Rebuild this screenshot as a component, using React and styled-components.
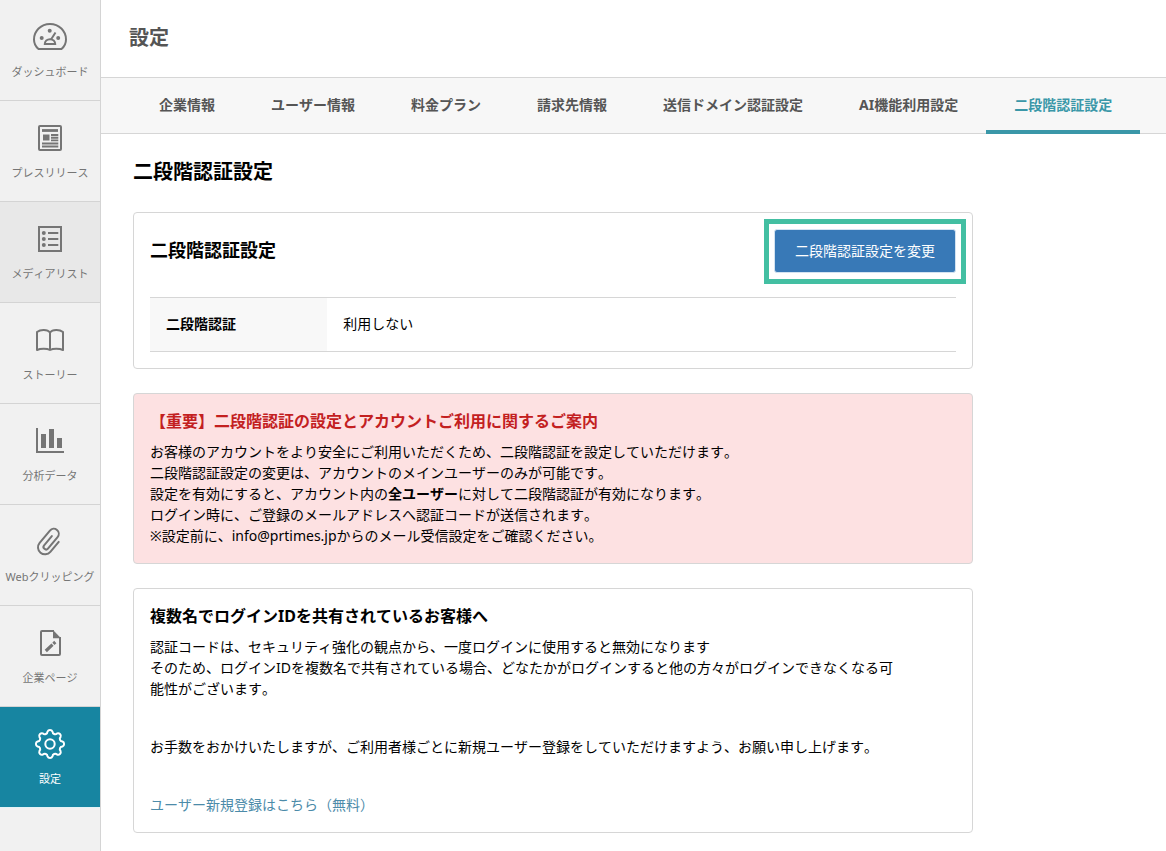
import React from 'react';
import styled, { createGlobalStyle, css } from 'styled-components';

const GlobalStyle = createGlobalStyle`
  *, *::before, *::after {
    box-sizing: border-box;
  }

  body {
    margin: 0;
    background: #fff;
    color: #000;
    font-family: 'Noto Sans', 'Noto Sans CJK JP', sans-serif;
    font-size: 14px;
    font-kerning: none;
    line-height: 21px;
  }

  a {
    color: inherit;
    text-decoration: none;
  }
`;

const Layout = styled.div`
  display: flex;
  min-height: 100vh;
`;

const Sidebar = styled.nav`
  flex: 0 0 101px;
  background: #f1f1f1;
  border-right: 1px solid #d4d4d4;
`;

const SideLink = styled.a`
  display: flex;
  flex-direction: column;
  align-items: center;
  gap: 8px;
  padding: 20px 0;
  border-bottom: 1px solid #d4d4d4;
  color: #757575;
  font-size: 11px;
  line-height: 16px;
  white-space: nowrap;

  ${({ $hovered }) => $hovered && css`
    background: #e8e8e8;
  `}

  ${({ $active }) => $active && css`
    background: #1785a1;
    border-bottom-color: #e3f3f6;
    color: #fff;
  `}
`;

const IconSvg = styled.svg`
  width: 36px;
  height: 36px;
  fill: none;
  stroke: currentColor;
  stroke-width: 2;
`;

const Main = styled.main`
  flex: 1;
  min-width: 0;
`;

const PageHeader = styled.header`
  padding: 23px 28px 25px;
  border-bottom: 1px solid #d6d6d6;
`;

const PageTitle = styled.h1`
  margin: 0;
  color: #555;
  font-size: 20px;
  line-height: 29px;
`;

const Tabs = styled.nav`
  display: flex;
  padding: 0 30px;
  background: #f7f7f7;
  border-bottom: 1px solid #d6d6d6;
`;

const Tab = styled.a`
  margin-bottom: -1px;
  padding: 16px 28px 15px;
  border-bottom: 4px solid ${({ $active }) => ($active ? '#3a97a8' : 'transparent')};
  color: ${({ $active }) => ($active ? '#3a97a8' : '#555')};
  font-weight: 700;
  white-space: nowrap;
`;

const Content = styled.div`
  display: flex;
  flex-direction: column;
  gap: 24px;
  max-width: 904px;
  padding: 24px 32px 16px;
`;

const SectionTitle = styled.h2`
  margin: 0 0 2px;
  font-size: 20px;
  line-height: 28px;
`;

const Card = styled.section`
  padding: 16px;
  border: 1px solid #d6d6d6;
  border-radius: 4px;
`;

const NoticeCard = styled(Card)`
  padding: 15px 16px 17px;
  background: ${({ $alert }) => ($alert ? '#fde1e2' : '#fff')};
`;

const CardHeader = styled.div`
  display: flex;
  align-items: center;
  justify-content: space-between;
  margin-bottom: 24px;
`;

const CardTitle = styled.h3`
  margin: 0;
  padding-bottom: 2px;
  font-size: 18px;
  line-height: 26px;
`;

const ButtonFrame = styled.div`
  position: relative;
  display: flex;

  /* Square highlight drawn round the button */
  &::after {
    content: '';
    position: absolute;
    inset: -10px -10px -11px;
    border: 5px solid #43bfa2;
    pointer-events: none;
  }
`;

const ChangeButton = styled.button`
  padding: 11px 20px;
  border: 1px solid #d3e3f1;
  border-radius: 3px;
  background: #3879b7;
  color: #fff;
  font: inherit;
  line-height: 20px;
  cursor: pointer;
`;

const SettingTable = styled.table`
  width: 100%;
  border-collapse: separate;
  border-spacing: 0;

  th,
  td {
    padding: 15px 16px 17px;
    border-top: 1px solid #d6d6d6;
    border-bottom: 1px solid #d6d6d6;
    text-align: left;
  }

  th {
    width: 22%;
    background: #f8f8f8;
  }
`;

const NoticeTitle = styled.h3`
  margin: 0 0 8px;
  color: ${({ $alert }) => ($alert ? '#c3201f' : '#000')};
  font-size: 16px;
  line-height: 24px;
`;

const NoticeText = styled.p`
  max-width: 750px;
  margin: 0;

  & + & {
    margin-top: 37px;
  }
`;

const TextLink = styled.a`
  color: #4c8ba9;
`;

// Eight rounded teeth made of alternating convex and concave arcs
const gearPath = Array.from({ length: 17 }, (_, i) => {
  const angle = ((i * 22.5 - 101.25) * Math.PI) / 180;
  const x = (18 + 12.7 * Math.cos(angle)).toFixed(2);
  const y = (17 + 12.7 * Math.sin(angle)).toFixed(2);
  return i === 0 ? `M${x} ${y}` : `A2.7 2.7 0 0 ${i % 2} ${x} ${y}`;
}).join('') + 'Z';

const icons = {
  dashboard: (
    <>
      <path d="M6.5 29h23C32.500 26.500 34 23 34 19.500 34 11 27 4 18 4S2 11 2 19.500c0 3.500 1.500 7 4.500 9.500z" />
      <path d="M12.800 24h10.400c0-2.800-2.300-4.800-5.200-4.800s-5.200 2-5.200 4.800zM19 19.500l4.500-7" />
      <g fill="currentColor" stroke="none">
        <circle cx="9.700" cy="18" r="2" />
        <circle cx="17.700" cy="10.800" r="2" />
        <circle cx="26.200" cy="18" r="2" />
      </g>
    </>
  ),
  release: (
    <>
      <rect x="7" y="5" width="22" height="24" rx="1" />
      <path d="M10 9.500h16" strokeWidth="2.800" />
      <path d="M11 13.500h6.500v6H11z" fill="currentColor" stroke="none" />
      <path d="M19 14h7.300M19 16.700h7.300M19 19.400h7.300M10 22.500h16.300M10 25.500h16.300" strokeWidth="1.900" />
    </>
  ),
  list: (
    <>
      <rect x="7" y="5" width="22" height="24" />
      <path d="M16 11h10.300M16 17h10.300M16 23h10.300" />
      <g fill="currentColor" stroke="none">
        <circle cx="11.800" cy="11" r="2" />
        <circle cx="11.800" cy="17" r="2" />
        <circle cx="11.800" cy="23" r="2" />
      </g>
    </>
  ),
  story: (
    <path
      d="M18 9.500C15.500 6.300 8.500 6.300 5 9v18c3.500-1.800 10-1.800 13 0 3-1.800 9.500-1.800 13 0V9c-3.500-2.700-10.500-2.700-13 .5zM18 9.500V27"
      strokeLinejoin="round"
    />
  ),
  chart: (
    <>
      <path d="M5 4v24h27" />
      <path d="M9 10h5v14H9zM17 5h5v19h-5zM25 14h5v10h-5z" fill="currentColor" stroke="none" />
    </>
  ),
  clip: (
    <path
      d="M7-6V7A7 7 0 0 1-7 7V-9A5 5 0 0 1 3-9V6a2.500 2.500 0 0 1-5 0V-6"
      transform="translate(17.500 17) rotate(40)"
      strokeLinecap="round"
    />
  ),
  page: (
    <>
      <path d="M22 5H10a1 1 0 0 0-1 1v22a1 1 0 0 0 1 1h17a1 1 0 0 0 1-1V11" />
      <path d="M21 4l8 8.300h-8z" fill="currentColor" stroke="none" />
      <path d="M13.800 25l6.700-6.300M21.400 17.800l1.900-1.800" strokeWidth="3.200" />
    </>
  ),
  setting: (
    <>
      <path d={gearPath} strokeLinejoin="round" />
      <circle cx="18" cy="17" r="4.700" />
    </>
  ),
};

const sideItems = [
  { icon: 'dashboard', label: 'ダッシュボード' },
  { icon: 'release', label: 'プレスリリース' },
  { icon: 'list', label: 'メディアリスト', hovered: true },
  { icon: 'story', label: 'ストーリー' },
  { icon: 'chart', label: '分析データ' },
  { icon: 'clip', label: 'Webクリッピング' },
  { icon: 'page', label: '企業ページ' },
  { icon: 'setting', label: '設定', active: true },
];

const tabs = [
  '企業情報',
  'ユーザー情報',
  '料金プラン',
  '請求先情報',
  '送信ドメイン認証設定',
  'AI機能利用設定',
  '二段階認証設定',
];

const App = () => {
  return (
    <>
      <GlobalStyle />
      <Layout>
        <Sidebar>
          {sideItems.map(({ icon, label, hovered, active }) => (
            <SideLink key={icon} href={`#${icon}`} $hovered={hovered} $active={active}>
              <IconSvg viewBox="0 0 36 36" aria-hidden="true">{icons[icon]}</IconSvg>
              {label}
            </SideLink>
          ))}
        </Sidebar>

        <Main>
          <PageHeader>
            <PageTitle>設定</PageTitle>
          </PageHeader>
          <Tabs>
            {tabs.map((tab) => (
              <Tab key={tab} href="#tab" $active={tab === '二段階認証設定'}>{tab}</Tab>
            ))}
          </Tabs>

          <Content>
            <SectionTitle>二段階認証設定</SectionTitle>

            <Card>
              <CardHeader>
                <CardTitle>二段階認証設定</CardTitle>
                <ButtonFrame>
                  <ChangeButton type="button">二段階認証設定を変更</ChangeButton>
                </ButtonFrame>
              </CardHeader>
              <SettingTable>
                <tbody>
                  <tr>
                    <th scope="row">二段階認証</th>
                    <td>利用しない</td>
                  </tr>
                </tbody>
              </SettingTable>
            </Card>

            <NoticeCard $alert>
              <NoticeTitle $alert>【重要】二段階認証の設定とアカウントご利用に関するご案内</NoticeTitle>
              <NoticeText>
                お客様のアカウントをより安全にご利用いただくため、二段階認証を設定していただけます。<br />
                二段階認証設定の変更は、アカウントのメインユーザーのみが可能です。<br />
                設定を有効にすると、アカウント内の<strong>全ユーザー</strong>に対して二段階認証が有効になります。<br />
                ログイン時に、ご登録のメールアドレスへ認証コードが送信されます。<br />
                ※設定前に、info@prtimes.jpからのメール受信設定をご確認ください。
              </NoticeText>
            </NoticeCard>

            <NoticeCard>
              <NoticeTitle>複数名でログインIDを共有されているお客様へ</NoticeTitle>
              <NoticeText>
                認証コードは、セキュリティ強化の観点から、一度ログインに使用すると無効になります<br />
                そのため、ログインIDを複数名で共有されている場合、どなたかがログインすると他の方々がログインできなくなる可能性がございます。
              </NoticeText>
              <NoticeText>
                お手数をおかけいたしますが、ご利用者様ごとに新規ユーザー登録をしていただけますよう、お願い申し上げます。
              </NoticeText>
              <NoticeText>
                <TextLink href="#register">ユーザー新規登録はこちら（無料）</TextLink>
              </NoticeText>
            </NoticeCard>
          </Content>
        </Main>
      </Layout>
    </>
  );
};

export default App;
